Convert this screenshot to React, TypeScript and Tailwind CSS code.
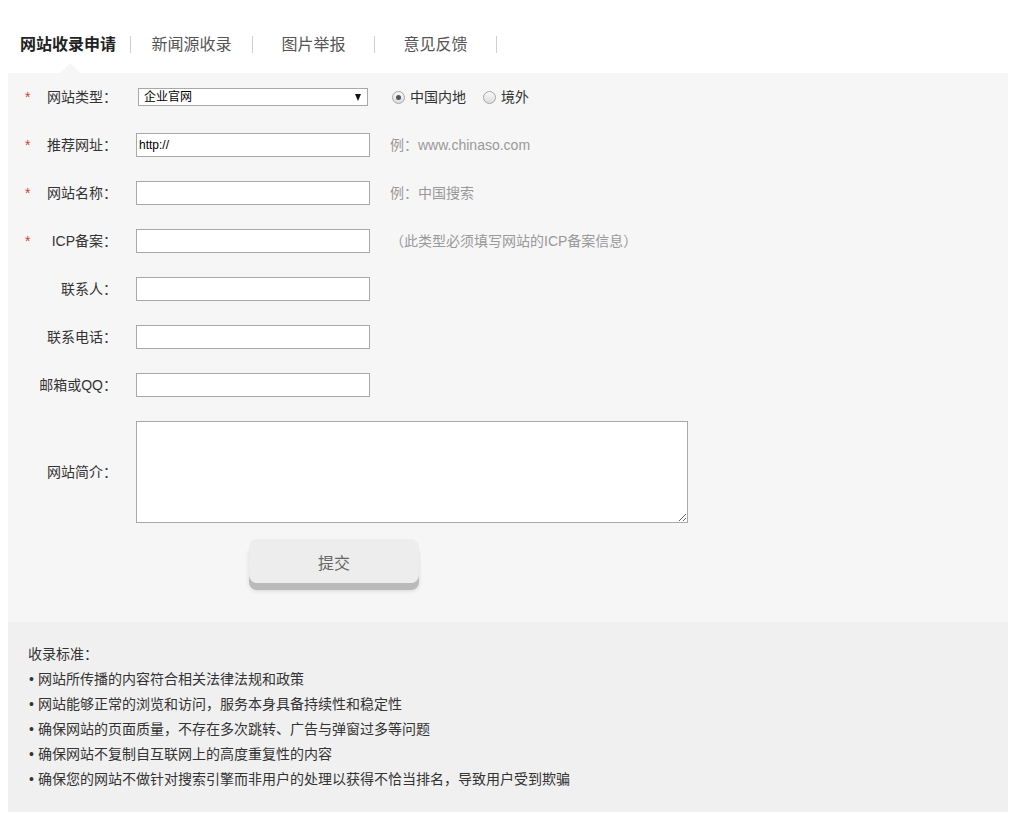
import { ReactNode } from "react";

const font = { fontFamily: '"Liberation Sans", "Noto Sans CJK SC", sans-serif' };

function Row({ label, required, children }: { label: string; required?: boolean; children: ReactNode }) {
  return (
    <div className="flex items-center h-[24px]">
      <div className="w-[128px] flex items-center pl-[17px] pr-[19px] text-[14px] text-[#333] leading-[24px]">
        <span className="w-[10px] text-[#e4393c] text-[14px]">{required ? "*" : ""}</span>
        <span className="flex-1 text-right whitespace-nowrap">{label}</span>
      </div>
      {children}
    </div>
  );
}

function TextBox({ value }: { value?: string }) {
  return (
    <input
      type="text"
      defaultValue={value}
      className="w-[234px] h-[24px] border border-[#a9a9a9] bg-white px-[2px] text-[12px] text-black outline-none"
      style={font}
    />
  );
}

function Radio({ checked, label }: { checked?: boolean; label: string }) {
  return (
    <div className="flex items-center gap-[5px]">
      <span className="w-[13px] h-[13px] rounded-full border border-[#a6a6a6] bg-gradient-to-b from-[#fafafa] to-[#dcdcdc] flex items-center justify-center">
        {checked && <span className="w-[5px] h-[5px] rounded-full bg-[#555]" />}
      </span>
      <span className="text-[14px] text-[#333] leading-[20px]">{label}</span>
    </div>
  );
}

export default function App() {
  const tabs = ["新闻源收录", "图片举报", "意见反馈"];
  const rules = [
    "网站所传播的内容符合相关法律法规和政策",
    "网站能够正常的浏览和访问，服务本身具备持续性和稳定性",
    "确保网站的页面质量，不存在多次跳转、广告与弹窗过多等问题",
    "确保网站不复制自互联网上的高度重复性的内容",
    "确保您的网站不做针对搜索引擎而非用户的处理以获得不恰当排名，导致用户受到欺骗",
  ];
  return (
    <div className="w-[1015px] min-h-[819px] bg-white" style={font}>
      <div className="ml-[8px] w-[1000px]">
        {/* tabs */}
        <div className="h-[73px] flex items-center pt-[15px] relative">
          <div className="flex items-center">
            <div className="pl-[12px] pr-[14px] text-[16px] font-bold text-[#222] leading-[17px] border-r border-[#cfcfcf]">
              网站收录申请
            </div>
            {tabs.map((t) => (
              <div key={t} className="w-[122px] text-center text-[16px] text-[#555] leading-[17px] border-r border-[#cfcfcf]">
                {t}
              </div>
            ))}
          </div>
          <div className="absolute left-[52px] bottom-0 w-0 h-0 border-l-[10px] border-r-[10px] border-b-[10px] border-l-transparent border-r-transparent border-b-[#f6f6f6]" />
        </div>

        {/* form */}
        <div className="bg-[#f6f6f6] pt-[12px] pb-[39px] flex flex-col gap-[24px]">
          <Row label="网站类型：" required>
            <div className="ml-[2px] w-[230px] h-[18px] border border-[#a9a9a9] bg-white flex items-center justify-between pl-[5px] pr-[6px]">
              <span className="text-[12px] text-black leading-[16px]">企业官网</span>
              <span className="w-0 h-0 border-l-[3.5px] border-r-[3.5px] border-t-[7px] border-l-transparent border-r-transparent border-t-[#111]" />
            </div>
            <div className="ml-[24px] flex items-center gap-[17px]">
              <Radio checked label="中国内地" />
              <Radio label="境外" />
            </div>
          </Row>
          <Row label="推荐网址：" required>
            <TextBox value="http://" />
            <span className="ml-[20px] text-[14px] text-[#999]">例：www.chinaso.com</span>
          </Row>
          <Row label="网站名称：" required>
            <TextBox />
            <span className="ml-[20px] text-[14px] text-[#999]">例：中国搜索</span>
          </Row>
          <Row label="ICP备案：" required>
            <TextBox />
            <span className="ml-[20px] text-[14px] text-[#999]">（此类型必须填写网站的ICP备案信息）</span>
          </Row>
          <Row label="联系人：">
            <TextBox />
          </Row>
          <Row label="联系电话：">
            <TextBox />
          </Row>
          <Row label="邮箱或QQ：">
            <TextBox />
          </Row>
          <div className="flex items-center">
            <div className="w-[128px] pr-[19px] text-right text-[14px] text-[#333] leading-[24px]">网站简介：</div>
            <textarea className="w-[552px] h-[102px] border border-[#a9a9a9] bg-white outline-none block" />
          </div>
          <div className="pl-[241px] -mt-[8px]">
            <button className="w-[170px] h-[44px] rounded-[8px] bg-[#ededed] text-[16px] text-[#666] pt-[6px] shadow-[0_7px_0_#bababa,0_8px_4px_rgba(0,0,0,0.12)]">
              提交
            </button>
          </div>
        </div>

        {/* rules */}
        <div className="bg-[#f0f0f0] pt-[20px] pb-[20px] px-[20px] text-[14px] text-[#333] leading-[25px]">
          <div>收录标准：</div>
          {rules.map((r) => (
            <div key={r} className="flex">
              <span className="w-[10px] pl-[1px]">•</span>
              <span>{r}</span>
            </div>
          ))}
        </div>
      </div>
    </div>
  );
}
